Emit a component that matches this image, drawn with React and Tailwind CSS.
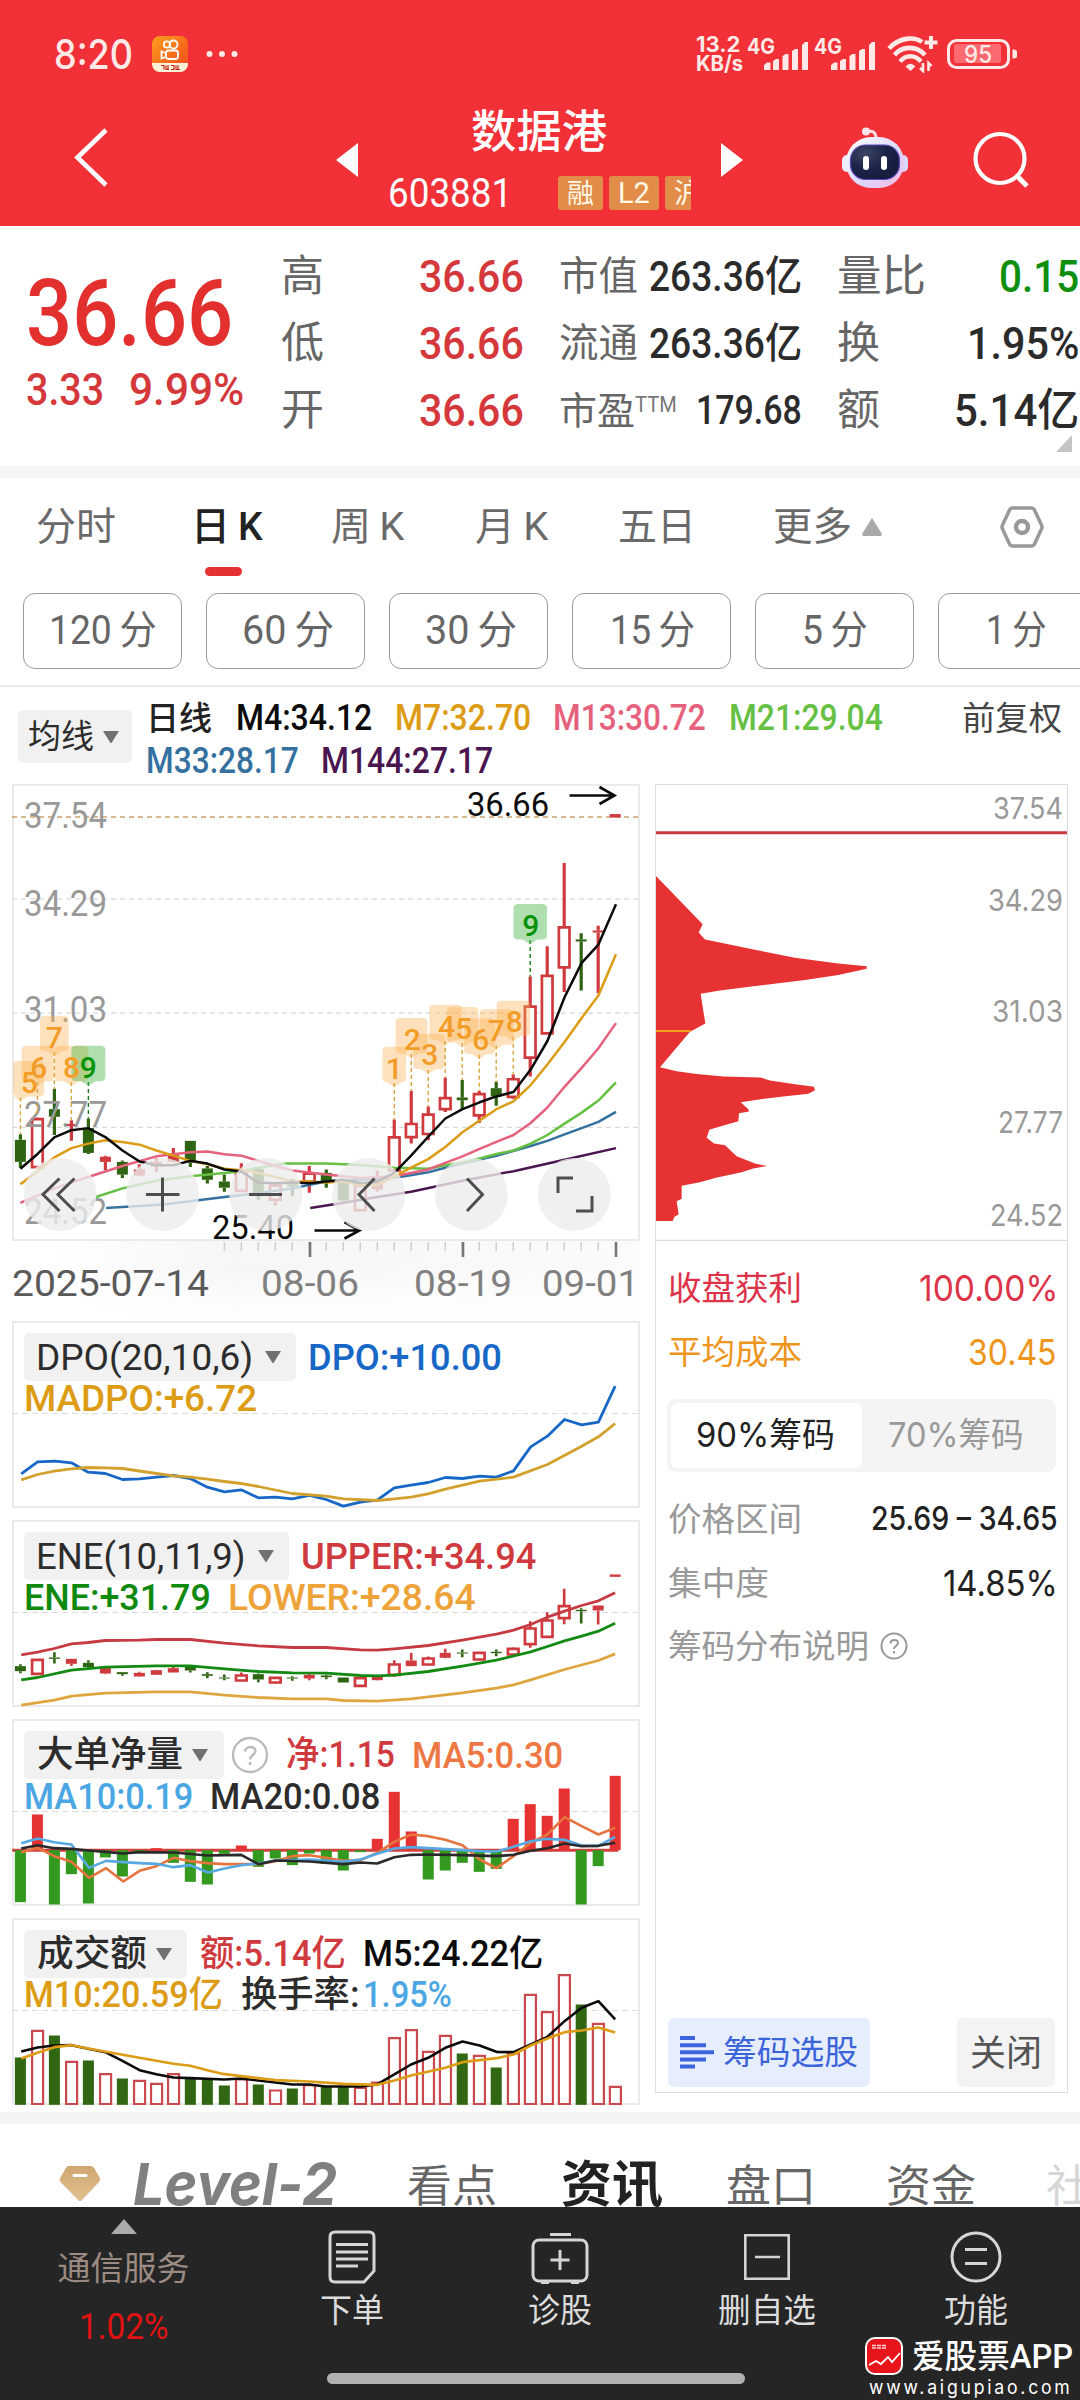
import { useLayoutEffect, useRef, useState } from 'react'
import clsx from 'clsx'

const RED = '#cf3a3f'
const GREEN = '#2f6413'

// index -> x on the shared 36-day axis
const dayX = (i) => 50 + i * 41.63

const KLINE = [
  // [type, high, bodyTop, bodyBottom, low]   g = down, h = hollow up, f = filled up
  ['g', 1058, 1074, 1138, 1155], ['h', 1010, 1014, 1153, 1158], ['g', 926, 985, 1007, 1060], ['f', 1017, 1028, 1034, 1077],
  ['g', 1013, 1040, 1112, 1115], ['f', 1120, 1123, 1138, 1162], ['g', 1134, 1138, 1175, 1185], ['f', 1145, 1160, 1178, 1180],
  ['f', 1128, 1138, 1152, 1168], ['f', 1098, 1118, 1138, 1140], ['g', 1077, 1077, 1140, 1153], ['g', 1150, 1157, 1190, 1201],
  ['g', 1175, 1195, 1213, 1225], ['h', 1142, 1167, 1222, 1224], ['g', 1158, 1158, 1232, 1248], ['h', 1200, 1207, 1248, 1265],
  ['g', 1188, 1203, 1209, 1238], ['h', 1150, 1172, 1195, 1228], ['g', 1160, 1170, 1196, 1213], ['g', 1190, 1195, 1250, 1252],
  ['h', 1203, 1207, 1278, 1280], ['f', 1163, 1188, 1218, 1225], ['h', 1015, 1067, 1163, 1165], ['h', 932, 1028, 1066, 1085],
  ['h', 977, 1001, 1057, 1075], ['h', 894, 953, 985, 993], ['g', 900, 951, 959, 985], ['h', 932, 941, 1003, 1025],
  ['g', 905, 924, 948, 975], ['h', 884, 898, 949, 955], ['h', 600, 687, 835, 890], ['h', 512, 598, 765, 767],
  ['h', 270, 457, 573, 645], ['g', 474, 492, 498, 640], ['f', 452, 466, 472, 648], ['f', 128, 128, 138, 138],
]

const ENE_KLINE = [
  ['g', 1064, 1070, 1085, 1091], ['h', 1049, 1051, 1093, 1095], ['g', 1028, 1044, 1048, 1062], ['f', 1048, 1048, 1063, 1069],
  ['g', 1052, 1060, 1073, 1077], ['f', 1075, 1075, 1092, 1094], ['g', 1088, 1088, 1094, 1099], ['f', 1087, 1090, 1101, 1102],
  ['f', 1081, 1082, 1096, 1096], ['f', 1072, 1076, 1089, 1090], ['g', 1068, 1071, 1083, 1089], ['g', 1088, 1094, 1099, 1106],
  ['g', 1095, 1104, 1107, 1112], ['h', 1089, 1098, 1113, 1115], ['g', 1092, 1094, 1110, 1118], ['h', 1103, 1105, 1119, 1122],
  ['g', 1100, 1104, 1107, 1114], ['f', 1091, 1096, 1107, 1112], ['g', 1095, 1098, 1103, 1109], ['g', 1104, 1104, 1119, 1119],
  ['h', 1104, 1106, 1129, 1131], ['f', 1096, 1101, 1112, 1113], ['h', 1052, 1065, 1096, 1102], ['f', 1030, 1053, 1070, 1070],
  ['h', 1041, 1047, 1065, 1067], ['f', 1018, 1030, 1045, 1046], ['g', 1020, 1029, 1032, 1043], ['h', 1028, 1030, 1050, 1053],
  ['g', 1020, 1027, 1031, 1040], ['h', 1014, 1018, 1035, 1037], ['h', 935, 957, 1004, 1015], ['h', 908, 933, 982, 984],
  ['h', 838, 890, 926, 944], ['g', 896, 901, 905, 942], ['f', 888, 888, 903, 945], ['f', 795, 795, 802, 802],
]

// bar ends relative to the zero line at 452
const NET_FLOW = [
  608, 345, 615, 524, 612, 474, 531, 460, 446, 490, 547, 555, 463, 438, 502, 477, 497, 462,
  493, 513, 458, 418, 277, 396, 540, 513, 490, 517, 508, 358, 314, 349, 267, 615, 500, 229,
]

const TURNOVER = [
  ['g', 1074], ['r', 992], ['g', 1008], ['r', 1085], ['g', 1083], ['r', 1122], ['g', 1137], ['r', 1142], ['r', 1151],
  ['r', 1122], ['g', 1138], ['g', 1138], ['g', 1158], ['r', 1138], ['g', 1155], ['r', 1171], ['g', 1167], ['r', 1155],
  ['g', 1160], ['g', 1160], ['r', 1163], ['r', 1147], ['r', 1014], ['r', 990], ['r', 1055], ['r', 1007], ['g', 1062],
  ['r', 1067], ['g', 1104], ['r', 1060], ['r', 884], ['r', 936], ['r', 825], ['g', 915], ['r', 971], ['r', 1160],
]

const MARKS = [
  // [label, day, labelX, badgeLeft, badgeRight, top]
  ['5', 0, 72, 32, 108, 845], ['6', 1, 95, 53, 132, 801], ['7', 2, 133, 98, 168, 714], ['8', 3, 175, 134, 216, 801], ['9', 4, 216, 175, 258, 801],
  ['1', 22, 966, 937, 995, 804], ['2', 23, 1010, 969, 1047, 720], ['3', 24, 1053, 1013, 1090, 766], ['4', 25, 1094, 1052, 1131, 682],
  ['5', 26, 1136, 1095, 1172, 688], ['6', 27, 1178, 1137, 1213, 722], ['7', 28, 1216, 1175, 1258, 695], ['8', 29, 1260, 1217, 1299, 670],
  ['9', 30, 1300, 1258, 1340, 389],
]

const MAIN_LINES = [
  ['#4a1650', '760,1272 850,1255 924,1240 1007,1225 1133,1193 1258,1165 1383,1132 1509,1098'],
  ['#34719f', '260,1272 400,1262 550,1240 640,1228 716,1215 799,1195 883,1190 980,1182 1049,1168 1133,1142 1216,1120 1300,1092 1341,1077 1383,1058 1425,1040 1466,1022 1509,993'],
  ['#66c044', '235,1240 300,1215 383,1193 466,1180 550,1170 591,1165 633,1155 700,1143 799,1143 883,1147 966,1155 1049,1158 1091,1148 1133,1140 1175,1128 1216,1115 1258,1105 1300,1085 1341,1060 1383,1027 1425,995 1466,960 1509,907'],
  ['#e5617c', '50,1257 133,1215 216,1182 300,1150 383,1122 466,1110 508,1108 550,1116 591,1120 633,1135 675,1150 716,1163 799,1175 883,1185 966,1180 1049,1160 1133,1122 1175,1100 1216,1080 1258,1060 1300,1025 1341,980 1383,920 1425,865 1466,808 1509,735'],
  ['#dc9c16', '50,1203 92,1165 133,1125 175,1098 216,1085 258,1075 300,1080 342,1088 383,1105 425,1120 466,1135 508,1145 550,1158 591,1162 633,1170 675,1182 716,1195 758,1195 799,1198 841,1195 883,1205 924,1205 966,1180 1007,1155 1049,1130 1091,1095 1133,1052 1175,1018 1216,985 1258,962 1300,915 1341,855 1383,790 1425,720 1466,655 1509,535'],
  ['#0b0b0b', '50,1158 92,1115 133,1067 175,1046 216,1040 258,1066 300,1105 342,1137 383,1148 425,1148 466,1135 508,1143 550,1160 591,1166 633,1198 675,1200 716,1198 758,1200 799,1195 841,1190 883,1200 924,1195 966,1170 1007,1120 1049,1065 1091,1012 1133,985 1175,965 1216,948 1258,935 1300,870 1341,787 1383,660 1425,560 1466,507 1509,390'],
]

const DPO_LINES = [
  ['#1767c6', '52,493 92,457 135,455 175,460 216,488 258,492 300,510 342,508 383,503 425,498 466,507 508,533 550,547 591,541 633,565 675,563 716,568 758,558 799,570 841,590 883,578 924,572 966,535 1007,527 1049,519 1091,504 1133,507 1175,500 1216,503 1258,484 1300,412 1341,380 1383,330 1425,346 1466,338 1507,230'],
  ['#d2a02c', '52,511 92,495 133,485 175,478 216,474 258,475 300,477 383,492 425,499 466,503 508,509 550,516 591,522 633,531 716,552 799,560 841,568 924,573 966,568 1007,563 1049,553 1091,539 1175,515 1258,503 1341,465 1425,410 1466,382 1507,342'],
]

const ENE_LINES = [
  ['#c63b41', '52,1036 92,1028 133,1017 175,1003 216,999 258,993 340,992 383,990 466,990 550,1001 633,1009 716,1014 799,1014 883,1021 924,1022 966,1018 1049,1008 1133,992 1216,974 1258,962 1300,945 1341,923 1383,905 1425,888 1466,874 1507,850'],
  ['#138a13', '52,1111 92,1104 175,1082 258,1073 383,1069 466,1069 550,1078 633,1086 716,1090 799,1091 883,1098 924,1099 966,1097 1049,1086 1133,1070 1216,1052 1300,1027 1341,1011 1383,994 1425,980 1466,965 1507,941'],
  ['#dfa640', '52,1187 133,1172 175,1160 258,1151 383,1147 466,1147 550,1157 633,1164 716,1168 799,1168 841,1173 924,1175 1007,1168 1133,1150 1216,1136 1258,1126 1300,1111 1383,1080 1466,1053 1507,1033'],
]

const NET_LINES = [
  ['#e6743f', '52,458 92,445 133,470 175,487 218,535 260,506 302,546 342,514 383,500 425,475 466,485 508,491 550,494 591,494 633,494 675,485 716,470 758,467 799,475 841,484 883,482 924,460 966,427 1007,405 1049,410 1091,421 1133,437 1175,480 1216,506 1258,470 1300,430 1341,405 1383,353 1425,380 1466,405 1507,385'],
  ['#56a9e2', '52,431 92,417 133,428 175,435 218,505 260,484 302,488 342,491 383,493 425,503 466,497 510,519 550,507 591,497 633,492 675,483 758,480 841,487 883,480 924,463 966,447 1007,443 1091,449 1133,452 1175,455 1216,456 1258,442 1300,425 1341,418 1383,421 1425,438 1466,439 1507,412'],
  ['#2a2a2a', '52,447 92,437 133,446 175,448 216,453 258,457 300,462 342,458 425,459 508,468 591,466 633,494 675,483 758,486 841,494 883,489 924,492 966,473 1007,466 1049,465 1133,467 1216,470 1258,466 1300,454 1341,446 1383,432 1425,440 1466,439 1507,430'],
]

const TURNOVER_LINES = [
  ['#0b0b0b', '52,1056 92,1044 133,1038 175,1037 216,1048 258,1058 300,1084 342,1112 383,1124 425,1134 466,1136 550,1140 591,1137 675,1149 716,1155 758,1155 799,1161 883,1161 924,1155 966,1125 1007,1095 1049,1075 1091,1045 1133,1026 1175,1038 1216,1057 1258,1058 1300,1035 1341,1012 1383,965 1425,925 1466,905 1507,960'],
  ['#dc9c16', '52,1077 92,1060 133,1043 175,1037 216,1047 300,1066 383,1084 425,1093 466,1099 508,1112 550,1124 591,1130 675,1142 758,1146 841,1153 924,1156 966,1143 1007,1128 1091,1105 1133,1088 1216,1076 1258,1065 1300,1038 1341,1017 1383,998 1425,993 1466,984 1507,999'],
]

// Squeezes or stretches one line of text to the width given by className
function Fit({ className, children }) {
  const box = useRef(null)
  const text = useRef(null)
  const [scale, setScale] = useState(1)

  useLayoutEffect(() => {
    if (text.current.offsetWidth) setScale(box.current.offsetWidth / text.current.offsetWidth)
  }, [children])

  return (
    <span ref={box} className={clsx('block shrink-0 leading-none whitespace-nowrap', className)}>
      <span ref={text} className="inline-block origin-left" style={{ transform: `scaleX(${scale})` }}>
        {children}
      </span>
    </span>
  )
}

function Label({ x, y, w, size, fill, children, weight = 400, family = 'Roboto' }) {
  return (
    <text x={x} y={y} textLength={w} lengthAdjust="spacingAndGlyphs" fontSize={size} fontWeight={weight} fontFamily={`${family}, sans-serif`} fill={fill}>
      {children}
    </text>
  )
}

function Lines({ data, width = 2.8 }) {
  return data.map(([color, points]) => (
    <polyline key={color} points={points} fill="none" stroke={color} strokeWidth={width} strokeLinejoin="round" vectorEffect="non-scaling-stroke" />
  ))
}

function Candles({ data, wick = 3.2 }) {
  return data.map(([type, high, top, bottom, low], i) => {
    const x = dayX(i)
    const color = type === 'g' ? GREEN : RED
    return (
      <g key={i} stroke={color}>
        <path d={`M${x} ${high}V${top}M${x} ${bottom}V${low}`} strokeWidth={wick} vectorEffect="non-scaling-stroke" />
        {type === 'h' ? (
          <rect x={x - 13} y={top} width="26" height={bottom - top} fill="#fff" strokeWidth="2.7" vectorEffect="non-scaling-stroke" />
        ) : (
          <rect x={x - 13.5} y={top} width="27" height={bottom - top} fill={color} stroke="none" />
        )}
      </g>
    )
  })
}

function StatusBar() {
  return (
    <div className="flex h-[108px] items-center pl-[54px] text-[#ffe9e6]">
      <Fit className="mt-px w-[79px] font-[Inter] text-[41px] font-medium">8:20</Fit>
      <svg width="36" height="36" viewBox="0 0 36 36" className="ml-[19px]">
        <defs>
          <linearGradient id="ks" x1="0" x2="1" y1="0" y2="1">
            <stop offset="0" stopColor="#fba01c" />
            <stop offset="1" stopColor="#f2451d" />
          </linearGradient>
        </defs>
        <rect width="36" height="36" rx="8" fill="url(#ks)" />
        <g fill="none" stroke="#fff" strokeWidth="1.8">
          <circle cx="15" cy="8.5" r="3.2" />
          <circle cx="21.500" cy="8.5" r="4" />
          <rect x="14" y="14.500" width="12" height="8.500" rx="2.5" />
          <path d="M13.500 17l-4-1.5v7l4-1.5" />
        </g>
        <path d="M0 27h36v1a8 8 0 0 1-8 8H8a8 8 0 0 1-8-8z" fill="#fdf1d8" />
        <path d="M9 29.500h3v4M14 29.500v4h3M16 29v5M19 29.500h3v4h-3M24 29.500v4h4M26 29v4" fill="none" stroke="#c22a1e" strokeWidth="1.200" />
      </svg>
      <svg width="34" height="8" viewBox="0 0 34 8" className="ml-[17px]" fill="#ffe9e6">
        <circle cx="4.5" cy="4" r="3" />
        <circle cx="17" cy="4" r="3" />
        <circle cx="29.5" cy="4" r="3" />
      </svg>
      <div className="ml-[457px] flex flex-col font-[Inter] text-[21.500px] font-bold">
        <Fit className="-mb-[2px] w-[44px]">13.2</Fit>
        <Fit className="w-[47px]">KB/s</Fit>
      </div>
      <Signal />
      <Signal />
      <svg width="52" height="38" viewBox="0 0 52 38" className="ml-[10px]" fill="none" stroke="#ffe9e6" strokeWidth="4.6">
        <path d="M2 13.500C12 2.500 27 1 35 7" />
        <path d="M7.500 20C15 11 29 10 38 20" />
        <path d="M13 26.500C19 19.500 28 19.500 34 26.500" />
        <path d="M18.500 31.500Q23.500 26 28.500 31.500L23.500 36z" fill="#ffe9e6" stroke="none" />
        <path d="M44 1v13M37.500 7.500h13" strokeWidth="4" />
        <path d="M36 28v8l-3-3M41.500 36v-8l3 3" strokeWidth="2.600" />
      </svg>
      <svg width="70" height="30" viewBox="0 0 70 30" className="ml-[8px]">
        <rect x="1.500" y="1.500" width="60" height="27" rx="8" fill="none" stroke="#ffe9e6" strokeWidth="3" />
        <rect x="7" y="5" width="47" height="19" rx="2" fill="#fb6a70" />
        <path d="M65.500 10.500h1a2.500 2.500 0 0 1 0 9h-1z" fill="#ffe9e6" />
        <Label x="17" y="24" w="28" size="24" weight="500" fill="#ffe9e6" family="Inter">95</Label>
      </svg>
    </div>
  )
}

function Signal() {
  return (
    <svg width="62" height="34" viewBox="0 0 62 34" className="mr-[1px] ml-[4px]" fill="#ffe9e6">
      <Label x="0" y="17" w="28" size="21.500" weight="700" fill="#ffe9e6" family="Inter">4G</Label>
      <path d="M17 33v-5l3-2.500h3.500V33zM26 33V24l3-2h3V33zM35.500 33V19l3-2h3V33zM45 33V14l3-2h3V33zM55 33V8l3-3h3V33z" />
    </svg>
  )
}

function Robot() {
  return (
    <svg width="68" height="62" viewBox="0 0 68 62">
      <defs>
        <linearGradient id="shell" x1="0" x2="1" y1="0" y2="1">
          <stop offset="0" stopColor="#ffffff" />
          <stop offset=".55" stopColor="#dcd9ff" />
          <stop offset="1" stopColor="#f3b8e0" />
        </linearGradient>
        <radialGradient id="visor" cx=".3" cy=".25" r=".9">
          <stop offset="0" stopColor="#3c4564" />
          <stop offset=".5" stopColor="#1a2346" />
          <stop offset="1" stopColor="#141b3c" />
        </radialGradient>
      </defs>
      <path d="M26 4.500q9-2 9 7" fill="none" stroke="#ffd9e2" strokeWidth="3" />
      <circle cx="25" cy="4.500" r="4" fill="#ffe3ec" />
      <rect x="1" y="28" width="10" height="17" rx="5" fill="#eeecff" />
      <rect x="57" y="28" width="10" height="17" rx="5" fill="#d9d6ff" />
      <rect x="5" y="10" width="58" height="51" rx="25" fill="url(#shell)" />
      <rect x="9.500" y="18" width="49" height="34.500" rx="15" fill="url(#visor)" stroke="#5a48b8" strokeWidth="1.200" />
      <rect x="22" y="29" width="6" height="14" rx="3" fill="#fff" />
      <rect x="40" y="29" width="6" height="14" rx="3" fill="#fff" />
    </svg>
  )
}

function TitleBar() {
  return (
    <div className="flex h-[118px] items-start">
      <svg width="36" height="60" viewBox="0 0 36 60" className="mt-[20px] ml-[74px]" fill="none" stroke="#fff" strokeWidth="4.600">
        <path d="M32 2L3.500 29.500L32 57" />
      </svg>
      <svg width="22" height="34" viewBox="0 0 22 34" className="mt-[35px] ml-[226px]" fill="#fff">
        <path d="M22 0v34L0 17z" />
      </svg>
      <div className="ml-[29px] w-[304px] overflow-hidden pt-[2px] text-white">
        <Fit className="ml-[84px] w-[136px] text-[45px] font-medium">数据港</Fit>
        <div className="mt-[21px] flex h-[34px] items-center gap-[6px]">
          <Fit className="ml-px w-[124px] text-[41px]">603881</Fit>
          <div className="ml-[40px] flex h-[34px] w-[45px] shrink-0 items-center justify-center rounded-[3px] bg-[#e28c4a] pt-[2px] text-[#fff8e4]">
            <Fit className="w-[27px] text-[27px]">融</Fit>
          </div>
          <div className="flex h-[34px] w-[50px] shrink-0 items-center justify-center rounded-[3px] bg-[#e28c4a] text-[#fff8e4]">
            <Fit className="w-[32px] text-[29px]">L2</Fit>
          </div>
          <div className="flex h-[34px] w-[60px] shrink-0 items-center rounded-[3px] bg-[#e28c4a] pt-[2px] pl-[9px] text-[#fff8e4]">
            <Fit className="w-[27px] text-[27px]">沪</Fit>
          </div>
        </div>
      </div>
      <svg width="22" height="34" viewBox="0 0 22 34" className="mt-[35px] ml-[30px]" fill="#fff">
        <path d="M0 0v34L22 17z" />
      </svg>
      <div className="mt-[19px] ml-[98px]">
        <Robot />
      </div>
      <svg width="58" height="58" viewBox="0 0 58 58" className="mt-[23px] ml-[63px]" fill="none" stroke="#fff" strokeWidth="4.200">
        <circle cx="28" cy="27.500" r="24.500" />
        <path d="M45 45l10 10" strokeWidth="5" />
      </svg>
    </div>
  )
}

function Quote() {
  return (
    <section className="relative flex h-[240px] bg-white">
      <div className="w-[256px] pl-[26px] text-[#e2302f]">
        <Fit className="mt-[41px] w-[207px] text-[93px] font-medium">36.66</Fit>
        <div className="mt-[7px] flex text-[45px] font-medium text-[#d5383b]">
          <Fit className="w-[78px]">3.33</Fit>
          <Fit className="ml-[25px] w-[115px]">9.99%</Fit>
        </div>
      </div>
      <div className="mt-[17px] ml-[25px] w-[243px]">
        {['高', '低', '开'].map((name) => (
          <div key={name} className="flex h-[67px] items-center justify-between">
            <Fit className="w-[43px] text-[43px] text-[#666]">{name}</Fit>
            <Fit className="w-[105px] text-[45px] font-medium text-[#d5383b]">36.66</Fit>
          </div>
        ))}
      </div>
      <div className="mt-[17px] ml-[35px] w-[243px] text-[#2b2b2b]">
        <div className="flex h-[67px] items-center justify-between">
          <Fit className="w-[79px] text-[40px] text-[#666]">市值</Fit>
          <Fit className="w-[153px] text-[42px] font-medium">263.36亿</Fit>
        </div>
        <div className="flex h-[67px] items-center justify-between">
          <Fit className="w-[79px] text-[40px] text-[#666]">流通</Fit>
          <Fit className="w-[153px] text-[42px] font-medium">263.36亿</Fit>
        </div>
        <div className="flex h-[67px] items-center">
          <Fit className="w-[76px] text-[38px] text-[#666]">市盈</Fit>
          <Fit className="-mt-[12px] w-[42px] text-[22px] text-[#777]">TTM</Fit>
          <Fit className="ml-[19px] w-[106px] text-[40px] font-medium">179.68</Fit>
        </div>
      </div>
      <div className="mt-[17px] ml-[35px] w-[242px] text-[45px] font-medium text-[#2b2b2b]">
        <div className="flex h-[67px] items-center justify-between">
          <Fit className="w-[89px] text-[43px] font-normal text-[#666]">量比</Fit>
          <Fit className="w-[80px] text-[#0e8f0e]">0.15</Fit>
        </div>
        <div className="flex h-[67px] items-center justify-between">
          <Fit className="w-[43px] text-[43px] font-normal text-[#666]">换</Fit>
          <Fit className="w-[112px]">1.95%</Fit>
        </div>
        <div className="flex h-[67px] items-center justify-between">
          <Fit className="w-[43px] text-[43px] font-normal text-[#666]">额</Fit>
          <Fit className="w-[125px]">5.14亿</Fit>
        </div>
      </div>
      <svg width="16" height="17" viewBox="0 0 16 17" className="absolute right-[8px] bottom-[14px]">
        <path d="M16 0v17H0z" fill="#c4c4c4" />
      </svg>
    </section>
  )
}

// Label made of a number or letter and one Chinese character, set closer than a full space
function Pair({ a, b, className }) {
  return <Fit className={className}>{`${a}\u2009${b}`}</Fit>
}

function Periods() {
  return (
    <section className="h-[209px] border-b-2 border-[#e9e9e9] bg-white">
      <div className="flex h-[98px] items-center text-[39px] text-[#6a6a6a]">
        <Fit className="ml-[36px] w-[80px]">分时</Fit>
        <div className="relative ml-[75px]">
          <Pair a="日" b="K" className="w-[72px] font-medium text-[#222]" />
          <div className="absolute top-[59px] left-[14px] h-[9px] w-[37px] rounded-full bg-[#e53133]" />
        </div>
        <Pair a="周" b="K" className="ml-[68px] w-[73px]" />
        <Pair a="月" b="K" className="ml-[71px] w-[73px]" />
        <Fit className="ml-[70px] w-[78px]">五日</Fit>
        <Fit className="ml-[77px] w-[79px]">更多</Fit>
        <svg width="20" height="18" viewBox="0 0 20 18" className="ml-[10px]" fill="#aaa">
          <path d="M10 0L20 16q0 2-2 2H2q-2 0-2-2z" />
        </svg>
        <svg width="44" height="44" viewBox="0 0 44 44" className="ml-[118px]" fill="none" stroke="#999" strokeWidth="3.500" strokeLinejoin="round">
          <path d="M12.500 3h19q2 0 3 2l7 15q1 2 0 4l-7 15q-1 2-3 2h-19q-2 0-3-2l-7-15q-1-2 0-4l7-15q1-2 3-2z" />
          <circle cx="22" cy="22" r="6" strokeWidth="4.500" />
        </svg>
      </div>
      <div className="mt-[17px] flex w-[1300px] gap-[24px] pl-[23px] text-[40px] text-[#666]">
        <div className="flex h-[76px] w-[159px] items-center justify-center rounded-[12px] border-[1.5px] border-[#9a9a9a]">
          <Pair a="120" b="分" className="w-[108px]" />
        </div>
        <div className="flex h-[76px] w-[159px] items-center justify-center rounded-[12px] border-[1.5px] border-[#9a9a9a]">
          <Pair a="60" b="分" className="ml-[4px] w-[92px]" />
        </div>
        <div className="flex h-[76px] w-[159px] items-center justify-center rounded-[12px] border-[1.5px] border-[#9a9a9a]">
          <Pair a="30" b="分" className="ml-[4px] w-[92px]" />
        </div>
        <div className="flex h-[76px] w-[159px] items-center justify-center rounded-[12px] border-[1.5px] border-[#9a9a9a]">
          <Pair a="15" b="分" className="ml-px w-[85px]" />
        </div>
        <div className="flex h-[76px] w-[159px] items-center justify-center rounded-[12px] border-[1.5px] border-[#9a9a9a]">
          <Pair a="5" b="分" className="w-[66px]" />
        </div>
        <div className="flex h-[76px] w-[159px] items-center rounded-[12px] border-[1.5px] border-[#9a9a9a] pl-[47px]">
          <Pair a="1" b="分" className="w-[61px]" />
        </div>
      </div>
    </section>
  )
}

function Caret({ className }) {
  return (
    <svg width="16" height="12" viewBox="0 0 16 12" className={className}>
      <path d="M0 0h16L8.500 12h-1z" fill="#707070" />
    </svg>
  )
}

function Averages() {
  return (
    <section className="flex h-[97px] bg-white">
      <div className="mt-[23px] ml-[18px] flex h-[53px] w-[114px] items-center rounded-[5px] bg-[#f1f1f1] pl-[10px] text-[#2c2c2c]">
        <Fit className="w-[66px] text-[33px]">均线</Fit>
        <Caret className="ml-[9px]" />
      </div>
      <div className="mt-[13px] ml-[14px] text-[36px] font-medium">
        <div className="flex h-[36px] items-center">
          <Fit className="w-[66px] text-[33px] text-[#222]">日线</Fit>
          <Fit className="ml-[24px] w-[136px] text-[#0b0b0b]">M4:34.12</Fit>
          <Fit className="ml-[23px] w-[136px] text-[#dc9c16]">M7:32.70</Fit>
          <Fit className="ml-[22px] w-[153px] text-[#e5617c]">M13:30.72</Fit>
          <Fit className="ml-[23px] w-[154px] text-[#66c044]">M21:29.04</Fit>
          <Fit className="ml-[79px] w-[100px] text-[33px] font-normal text-[#444]">前复权</Fit>
        </div>
        <div className="mt-[7px] flex h-[36px] items-center">
          <Fit className="w-[153px] text-[#34719f]">M33:28.17</Fit>
          <Fit className="ml-[22px] w-[172px] text-[#4a1650]">M144:27.17</Fit>
        </div>
      </div>
    </section>
  )
}

function MainChart() {
  return (
    <svg width="628" height="538" viewBox="0 0 628 538" className="block">
      <defs>
        <linearGradient id="fog" x1="0" x2="1" y1="0" y2="0">
          <stop offset=".05" stopColor="#fff" />
          <stop offset=".35" stopColor="#f6f6f6" />
          <stop offset="1" stopColor="#fbfbfb" />
        </linearGradient>
        <linearGradient id="fogEnd" x1="0" x2="0" y1="0" y2="1">
          <stop offset=".3" stopColor="#fff" stopOpacity="0" />
          <stop offset="1" stopColor="#fff" />
        </linearGradient>
      </defs>
      <rect x="0" y="457" width="628" height="80" fill="url(#fog)" />
      <rect x="0" y="457" width="628" height="80" fill="url(#fogEnd)" />
      <rect x="1" y="1" width="626" height="455" fill="none" stroke="#eaeaea" strokeWidth="2" />
      <path d="M0 114.800h627M0 229.100h627M0 343.400h627" stroke="#d9d9d9" strokeDasharray="5 4" strokeWidth="1.200" />
      <path d="M0 33h627" stroke="#c9a26a" strokeDasharray="5 4" strokeWidth="1.500" />
      <g transform="translate(-12 -14) scale(.4082 .34435)">
        <Candles data={KLINE} />
      </g>
      <Label x="12" y="43.500" w="83" size="36" fill="#999">37.54</Label>
      <Label x="12" y="131.500" w="83" size="36" fill="#999">34.29</Label>
      <Label x="12" y="238" w="83" size="36" fill="#999">31.03</Label>
      <Label x="12" y="343" w="83" size="36" fill="#999">27.77</Label>
      <Label x="12" y="439.500" w="83" size="36" fill="#999">24.52</Label>
      <g transform="translate(-12 -14) scale(.4082 .34435)">
        <Lines data={MAIN_LINES} width={2.5} />
        {MARKS.map(([label, day, , left, right, top]) => {
          const green = label === '9'
          return (
            <g key={`${label}${day}`}>
              <path d={`M${dayX(day)} ${top + 105}V${KLINE[day][1]}`} stroke={green ? '#1c7a1c' : '#d9a53a'} strokeWidth="1.400" strokeDasharray="4 3" vectorEffect="non-scaling-stroke" />
              <rect x={left} y={top} width={right - left} height="103" rx="12" ry="10" fill={green ? '#4db84d' : '#f9b04e'} fillOpacity={green ? 0.45 : 0.38} />
              <path d={`M${dayX(day) - 18} ${top + 103}h36l-18 14z`} fill={green ? '#4db84d' : '#f9b04e'} fillOpacity={green ? 0.45 : 0.38} />
            </g>
          )
        })}
      </g>
      <g fontFamily="Roboto, sans-serif" fontWeight="500" fontSize="30" textAnchor="middle">
        {MARKS.map(([label, day, x, , , top]) => (
          <text key={day} x={x * 0.4082 - 12} y={(top + 92) * 0.34435 - 14} fill={label === '9' ? '#079307' : '#f49c28'}>
            {label}
          </text>
        ))}
      </g>
      <Label x="455" y="32" w="82" size="33" fill="#0b0b0b">36.66</Label>
      <path d="M557.500 11.500h45M587.500 3l15 8.500l-15 8.500" fill="none" stroke="#0b0b0b" strokeWidth="2.600" />
      <Label x="200" y="454.500" w="82" size="33" fill="#0b0b0b">25.40</Label>
      <path d="M302.500 446.500h45M332.500 438l15 8.500l-15 8" fill="none" stroke="#0b0b0b" strokeWidth="2.600" />
      <g fill="#ececec" fillOpacity=".8">
        {[48, 150.5, 253.7, 356.6, 459.4, 562.3].map((cx) => (
          <circle key={cx} cx={cx} cy="410.500" r="36.500" />
        ))}
      </g>
      <g fill="none" stroke="#4d4d4d" strokeWidth="3">
        <path d="M47.500 394.500L31 410.500L47.500 427M62.500 394.500L46 410.500L62.500 427" />
        <path d="M134 410.500h33.500M150.500 393.500v34" />
        <path d="M237 410.500h33" />
        <path d="M362.500 394.500L347 410.500L362.500 427" />
        <path d="M455 394.500L470.500 410.500L455 427" />
        <path d="M546 409v-15h15M564 427h16v-15" />
      </g>
      {Array.from({ length: 23 }, (_, i) => i + 12).map((i) => (
        <path key={i} d={`M${dayX(i) * 0.4082 - 12} 458v9`} stroke="#cfcfcf" strokeWidth="1.500" />
      ))}
      <path d="M298 458v15M451 458v15M604 458v15" stroke="#777" strokeWidth="2.600" />
      <Label x="0" y="511.500" w="197" size="36" fill="#5a5a5a">2025-07-14</Label>
      <Label x="249" y="511.500" w="98" size="36" fill="#808080">08-06</Label>
      <Label x="402" y="511.500" w="98" size="36" fill="#808080">08-19</Label>
      <Label x="530" y="511.500" w="97" size="36" fill="#808080">09-01</Label>
    </svg>
  )
}

function SubPanel({ transform, drawing, children }) {
  return (
    <div className="relative h-[187px] w-[628px]">
      <svg width="628" height="187" viewBox="0 0 628 187" className="absolute inset-0">
        <rect x="1" y="1" width="626" height="185" fill="none" stroke="#eaeaea" strokeWidth="2" />
        <path d="M0 92.500h627" stroke="#dcdcdc" strokeDasharray="6 4" strokeWidth="1.200" />
        <g transform={transform}>{drawing}</g>
      </svg>
      <div className="relative pt-[12px] pl-[12px] text-[37px] font-medium">{children}</div>
    </div>
  )
}

function SubPanels() {
  return (
    <div className="flex flex-col gap-[12px]">
      <SubPanel transform="translate(-12 -11.5) scale(.4082 .33333)" drawing={<Lines data={DPO_LINES} />}>
        <div className="flex h-[48px] items-center">
          <div className="flex h-[48px] w-[272px] items-center rounded-[5px] bg-[#f1f1f1] pl-[12px] text-[#2c2c2c]">
            <Fit className="w-[217px] font-normal">DPO(20,10,6)</Fit>
            <Caret className="ml-[12px]" />
          </div>
          <Fit className="ml-[12px] w-[194px] text-[#1767c6]">DPO:+10.00</Fit>
        </div>
        <div className="-mt-[3px] flex h-[40px] items-center">
          <Fit className="w-[233px] text-[#dc9c16]">MADPO:+6.72</Fit>
        </div>
      </SubPanel>

      <SubPanel
        transform="translate(-12 -210.5) scale(.4082 .33333)"
        drawing={
          <>
            <Candles data={ENE_KLINE} wick={2.6} />
            <Lines data={ENE_LINES} />
          </>
        }
      >
        <div className="flex h-[48px] items-center">
          <div className="flex h-[48px] w-[265px] items-center rounded-[5px] bg-[#f1f1f1] pl-[12px] text-[#2c2c2c]">
            <Fit className="w-[210px] font-normal">ENE(10,11,9)</Fit>
            <Caret className="ml-[12px]" />
          </div>
          <Fit className="ml-[12px] w-[235px] text-[#cf3a3f]">UPPER:+34.94</Fit>
        </div>
        <div className="-mt-[3px] flex h-[40px] items-center">
          <Fit className="w-[187px] text-[#0f8a0f]">ENE:+31.79</Fit>
          <Fit className="ml-[17px] w-[248px] text-[#eda33a]">LOWER:+28.64</Fit>
        </div>
      </SubPanel>

      <SubPanel
        transform="translate(-12 -19.5) scale(.4082 .33333)"
        drawing={
          <>
            <path d="M30 452H1515" stroke="#d2403f" strokeWidth="3" vectorEffect="non-scaling-stroke" />
            {NET_FLOW.map((end, i) => (
              <rect key={i} x={dayX(i) - 13.5} y={Math.min(end, 452)} width="27" height={Math.abs(end - 452)} fill={end < 452 ? '#e63232' : '#33991f'} />
            ))}
            <Lines data={NET_LINES} width={2.6} />
          </>
        }
      >
        <div className="flex h-[48px] items-center">
          <div className="flex h-[48px] w-[200px] items-center rounded-[5px] bg-[#f1f1f1] pl-[13px] text-[#2c2c2c]">
            <Fit className="w-[146px] text-[36px]">大单净量</Fit>
            <Caret className="ml-[9px]" />
          </div>
          <svg width="38" height="38" viewBox="0 0 38 38" className="ml-[7px] shrink-0" fill="none" stroke="#bbb" strokeWidth="2.400">
            <circle cx="19" cy="19" r="17" />
            <path d="M14 15.500c0-6 10.500-6 10.500-.5 0 4-5.500 4-5.500 8.500M19 26v3" />
          </svg>
          <Fit className="ml-[17px] w-[109px] text-[36px] text-[#cf3a3f]">净:1.15</Fit>
          <Fit className="ml-[17px] w-[151px] text-[#ee7843]">MA5:0.30</Fit>
        </div>
        <div className="-mt-[3px] flex h-[40px] items-center">
          <Fit className="w-[169px] text-[#4ba6e4]">MA10:0.19</Fit>
          <Fit className="ml-[17px] w-[170px] text-[#2c2c2c]">MA20:0.08</Fit>
        </div>
      </SubPanel>

      <SubPanel
        transform="translate(-12 -218.5) scale(.4082 .33333)"
        drawing={
          <>
            {TURNOVER.map(([type, top], i) =>
              type === 'g' ? (
                <rect key={i} x={dayX(i) - 13.5} y={top} width="27" height={1216 - top} fill="#316713" />
              ) : (
                <rect key={i} x={dayX(i) - 13} y={top + 2} width="27" height={1212 - top} fill="#fff" stroke="#c9494e" strokeWidth="2.2" vectorEffect="non-scaling-stroke" />
              ),
            )}
            <Lines data={TURNOVER_LINES} width={2.6} />
          </>
        }
      >
        <div className="flex h-[48px] items-center">
          <div className="flex h-[48px] w-[163px] items-center rounded-[5px] bg-[#f1f1f1] pl-[13px] text-[#2c2c2c]">
            <Fit className="w-[110px] text-[36px]">成交额</Fit>
            <Caret className="ml-[9px]" />
          </div>
          <Fit className="ml-[13px] w-[146px] text-[36px] text-[#cf3a3f]">额:5.14亿</Fit>
          <Fit className="ml-[17px] w-[180px] text-[36px] text-[#0b0b0b]">M5:24.22亿</Fit>
        </div>
        <div className="-mt-[3px] flex h-[40px] items-center text-[36px]">
          <Fit className="w-[199px] text-[#dc9c16]">M10:20.59亿</Fit>
          <Fit className="ml-[18px] w-[119px] text-[#2c2c2c]">换手率:</Fit>
          <Fit className="ml-[3px] w-[89px] text-[#4ba6e4]">1.95%</Fit>
        </div>
      </SubPanel>
    </div>
  )
}

const CHIPS =
  '0,308 140,448 128,472 147,492 202,503 297,522 417,545 547,562 632,570 632,577 547,595 447,610 292,628 192,640 134,650 142,700 148,736 102,760 12,863 62,875 122,883 202,890 314,893 342,902 412,912 474,920 477,930 457,940 382,948 324,955 254,965 277,985 279,992 249,997 247,1020 197,1034 160,1045 152,1068 174,1085 207,1090 242,1122 297,1143 333,1150 292,1157 257,1168 180,1184 132,1197 77,1207 77,1245 62,1252 68,1290 55,1298 50,1310 0,1310'

function ChipPanel() {
  return (
    <div className="ml-[15px] flex h-[1309px] w-[413px] flex-col border border-[#dedede] font-[Inter,'Noto_Sans_CJK_SC',sans-serif]">
      <svg width="411" height="456" viewBox="0 0 411 456" className="block shrink-0">
        <g transform="translate(0 -15) scale(.33333 .34435)">
          <polygon points={CHIPS} fill="#e63232" />
          <path d="M0 758h104" stroke="#f7a01e" strokeWidth="2" vectorEffect="non-scaling-stroke" />
        </g>
        <path d="M0 47.700h411" stroke="#c9373d" strokeWidth="3" />
        <path d="M0 455.300h411" stroke="#dedede" strokeWidth="1.300" />
        <Label x="337" y="34" w="70" size="30" fill="#999" family="Inter">37.54</Label>
        <Label x="332" y="125.500" w="75" size="30" fill="#999" family="Inter">34.29</Label>
        <Label x="336" y="237" w="71" size="30" fill="#999" family="Inter">31.03</Label>
        <Label x="342" y="348" w="65" size="30" fill="#999" family="Inter">27.77</Label>
        <Label x="334" y="441" w="73" size="30" fill="#999" family="Inter">24.52</Label>
      </svg>
      <div className="mt-[15px] flex h-[64px] items-center justify-between pr-[9px] pl-[12px] text-[#dc3349]">
        <Fit className="w-[134px] text-[33px]">收盘获利</Fit>
        <Fit className="w-[139px] text-[36px]">100.00%</Fit>
      </div>
      <div className="flex h-[64px] items-center justify-between pr-[10px] pl-[12px] text-[#ee951c]">
        <Fit className="w-[134px] text-[33px]">平均成本</Fit>
        <Fit className="w-[89px] text-[36px]">30.45</Fit>
      </div>
      <div className="mt-[15px] ml-[11px] flex h-[73px] w-[389px] items-center rounded-[9px] bg-[#f4f4f4] pl-[4px]">
        <div className="flex h-[65px] w-[191px] items-center rounded-[6px] bg-white pb-[2px] pl-[25px]">
          <Fit className="w-[139px] text-[34px] text-[#222]">90%筹码</Fit>
        </div>
        <Fit className="-mt-[2px] ml-[26px] w-[136px] text-[34px] text-[#999]">70%筹码</Fit>
      </div>
      <div className="mt-[15px] flex h-[64px] items-center justify-between pr-[9px] pl-[12px] text-[#222]">
        <Fit className="w-[134px] text-[33px] text-[#999]">价格区间</Fit>
        <Fit className="w-[187px] text-[32px] font-medium">25.69 – 34.65</Fit>
      </div>
      <div className="flex h-[64px] items-center justify-between pr-[9px] pl-[12px] text-[#222]">
        <Fit className="w-[101px] text-[33px] text-[#999]">集中度</Fit>
        <Fit className="w-[115px] text-[36px]">14.85%</Fit>
      </div>
      <div className="-mt-px flex h-[64px] items-center pl-[12px]">
        <Fit className="w-[201px] text-[33px] text-[#999]">筹码分布说明</Fit>
        <svg width="28" height="28" viewBox="0 0 28 28" className="ml-[11px]" fill="none" stroke="#999" strokeWidth="2">
          <circle cx="14" cy="14" r="12.500" />
          <path d="M10.500 11.500c0-5 7.500-4.500 7.500-.5 0 3-4 3-4 6M14 19v2.500" />
        </svg>
      </div>
      <div className="mt-auto mb-[5px] flex justify-between px-[12px]">
        <div className="flex h-[69px] w-[202px] items-center rounded-[6px] bg-[#e6edfc] pl-[12px] text-[#3c64da]">
          <svg width="34" height="33" viewBox="0 0 34 33" fill="#3c64da">
            <path d="M0 0h15v4H0zM0 7.200h26v4H0zM0 14.300h34v4H0zM0 21.500h26v4H0zM0 28.500h15v4H0z" />
          </svg>
          <Fit className="ml-[9px] w-[135px] text-[33px]">筹码选股</Fit>
        </div>
        <div className="flex h-[69px] w-[98px] items-center justify-center rounded-[6px] bg-[#f3f3f3]">
          <Fit className="w-[72px] text-[36px] text-[#555]">关闭</Fit>
        </div>
      </div>
    </div>
  )
}

function InfoTabs() {
  return (
    <div className="flex h-[83px] shrink-0 items-start overflow-hidden bg-white text-[44px] text-[#666]">
      <svg width="42" height="37" viewBox="0 0 42 37" className="mt-[41px] ml-[59px] shrink-0">
        <defs>
          <linearGradient id="gem" x1="0" x2="0" y1="0" y2="1">
            <stop offset="0" stopColor="#cfa670" />
            <stop offset="1" stopColor="#e2c08f" />
          </linearGradient>
        </defs>
        <path d="M9.500 1h22q2 0 3.500 2l6 10q1 2-1 4L22.500 35.500q-1.500 1-3 0L1.500 17q-1.500-2-.500-4l6-10q1-2 2.500-2z" fill="url(#gem)" />
        <path d="M15 10.500h12" stroke="#fff" strokeWidth="3" strokeLinecap="round" />
      </svg>
      <Fit className="mt-[31px] ml-[32px] w-[204px] font-[Inter] text-[58px] font-bold text-[#808080] italic">Level-2</Fit>
      <Fit className="mt-[41px] ml-[70px] w-[90px]">看点</Fit>
      <Fit className="mt-[36px] ml-[64px] w-[102px] text-[50px] font-bold text-[#222]">资讯</Fit>
      <Fit className="mt-[41px] ml-[63px] w-[90px]">盘口</Fit>
      <Fit className="mt-[41px] ml-[70px] w-[90px]">资金</Fit>
      <Fit className="mt-[41px] ml-[70px] w-[90px] text-[#d6d6d6]">社区</Fit>
    </div>
  )
}

function BottomBar() {
  return (
    <footer className="relative h-[193px] shrink-0 bg-[#252525] text-[33px] text-[#dcdcdc]">
      <div className="flex h-[150px] items-start">
        <div className="ml-[58px] flex w-[131px] flex-col items-center pt-[12px]">
          <svg width="26" height="15" viewBox="0 0 26 15">
            <path d="M13 0L26 15H0z" fill="#ababab" />
          </svg>
          <Fit className="mt-[18px] w-[132px] text-[#9c8b82]">通信服务</Fit>
          <Fit className="mt-[24px] w-[90px] text-[36px] text-[#e01212]">1.02%</Fit>
        </div>
        <div className="ml-[131px] flex w-[64px] flex-col items-center pt-[23px]">
          <svg width="48" height="54" viewBox="0 0 48 54" fill="none" stroke="#d5d5d5" strokeWidth="3">
            <path d="M6 2h35q5 0 5 5v34l-10 11H7q-5 0-5-5V7q0-5 5-5z" />
            <path d="M8 14.500h32M8 22h32M8 29h32M8 36h22" />
          </svg>
          <Fit className="mt-[10px] w-[64px]">下单</Fit>
        </div>
        <div className="ml-[144px] flex w-[64px] flex-col items-center pt-[25px]">
          <svg width="58" height="52" viewBox="0 0 58 52" fill="none" stroke="#d5d5d5" strokeWidth="3">
            <rect x="2" y="8" width="54" height="41" rx="6" />
            <path d="M19 2.500h21M10 50.500h8M40 50.500h8M19.500 28h19M29 18v20" />
          </svg>
          <Fit className="mt-[10px] w-[64px]">诊股</Fit>
        </div>
        <div className="ml-[126px] flex w-[98px] flex-col items-center pt-[27px]">
          <svg width="46" height="46" viewBox="0 0 46 46" fill="none" stroke="#d5d5d5" strokeWidth="2.600">
            <path d="M1.300 1.300h43.400v43.400H1.300zM11 23h25" />
          </svg>
          <Fit className="mt-[14px] w-[98px]">删自选</Fit>
        </div>
        <div className="ml-[128px] flex w-[64px] flex-col items-center pt-[24px]">
          <svg width="52" height="52" viewBox="0 0 52 52" fill="none" stroke="#d5d5d5" strokeWidth="3">
            <circle cx="26" cy="26" r="24" />
            <path d="M15 18.500h22M15 32.500h22" />
          </svg>
          <Fit className="mt-[11px] w-[64px]">功能</Fit>
        </div>
      </div>
      <div className="mt-[16px] ml-[327px] h-[11px] w-[418px] rounded-full bg-[#b1b1b1]" />
      <div className="absolute top-[130px] left-[865px] flex flex-col text-white">
        <div className="flex items-center">
          <svg width="38" height="38" viewBox="0 0 38 38">
            <rect x="1" y="1" width="36" height="36" rx="9" fill="#e8141c" stroke="#fff" strokeWidth="2" />
            <path d="M7 8.500h15M7 11h15" stroke="#ffd5d5" strokeWidth="1.400" strokeDasharray="4 1" />
            <path d="M4 28l7-4 5 3 7-7 4 5 8-9" fill="none" stroke="#fff" strokeWidth="1.800" />
          </svg>
          <Fit className="ml-[9px] w-[161px] pt-px text-[33px] font-medium">爱股票APP</Fit>
        </div>
        <Fit className="mt-[3px] ml-[4px] w-[204px] font-[Inter] text-[19px] tracking-[3px]">www.aigupiao.com</Fit>
      </div>
    </footer>
  )
}

export default function App() {
  return (
    <div className="flex h-[2400px] w-[1080px] flex-col overflow-hidden bg-white font-[Roboto,'Noto_Sans_CJK_SC',sans-serif]">
      <header className="h-[226px] shrink-0 bg-[#f13037]">
        <StatusBar />
        <TitleBar />
      </header>
      <Quote />
      <div className="h-[12px] shrink-0 bg-[#f5f5f5]" />
      <Periods />
      <Averages />
      <main className="flex h-[1328px] shrink-0 pl-[12px]">
        <div className="w-[628px]">
          <div className="h-[537px] overflow-hidden">
            <MainChart />
          </div>
          <SubPanels />
        </div>
        <ChipPanel />
      </main>
      <div className="h-[12px] shrink-0 bg-[#f4f4f4]" />
      <InfoTabs />
      <BottomBar />
    </div>
  )
}
